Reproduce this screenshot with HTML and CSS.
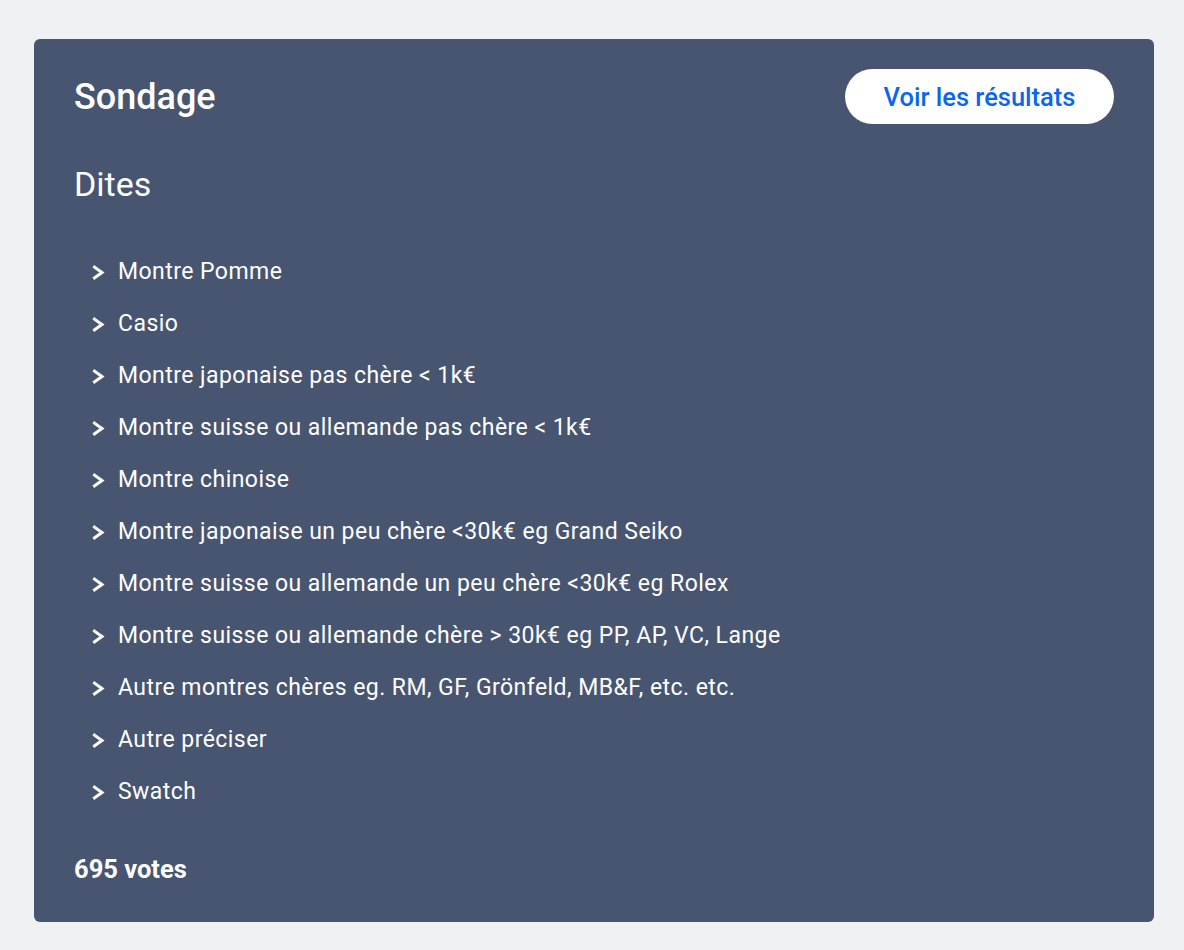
FILE: index.html
```html
<!DOCTYPE html>
<html lang="fr">
<head>
<meta charset="utf-8">
<title>Sondage</title>
<link rel="stylesheet" href="styles.css">
</head>
<body>
<section class="poll">
  <div class="poll-header">
    <h2 class="poll-title">Sondage</h2>
    <button class="results-btn">Voir les résultats</button>
  </div>
  <p class="poll-question">Dites</p>
  <ul class="options">
    <li><svg class="chev" viewBox="0 0 13 15"><polyline points="2.5,2.2 10,7.5 2.5,12.8"/></svg>Montre Pomme</li>
    <li><svg class="chev" viewBox="0 0 13 15"><polyline points="2.5,2.2 10,7.5 2.5,12.8"/></svg>Casio</li>
    <li><svg class="chev" viewBox="0 0 13 15"><polyline points="2.5,2.2 10,7.5 2.5,12.8"/></svg>Montre japonaise pas chère &lt; 1k€</li>
    <li><svg class="chev" viewBox="0 0 13 15"><polyline points="2.5,2.2 10,7.5 2.5,12.8"/></svg>Montre suisse ou allemande pas chère &lt; 1k€</li>
    <li><svg class="chev" viewBox="0 0 13 15"><polyline points="2.5,2.2 10,7.5 2.5,12.8"/></svg>Montre chinoise</li>
    <li><svg class="chev" viewBox="0 0 13 15"><polyline points="2.5,2.2 10,7.5 2.5,12.8"/></svg>Montre japonaise un peu chère &lt;30k€ eg Grand Seiko</li>
    <li><svg class="chev" viewBox="0 0 13 15"><polyline points="2.5,2.2 10,7.5 2.5,12.8"/></svg>Montre suisse ou allemande un peu chère &lt;30k€ eg Rolex</li>
    <li><svg class="chev" viewBox="0 0 13 15"><polyline points="2.5,2.2 10,7.5 2.5,12.8"/></svg>Montre suisse ou allemande chère &gt; 30k€ eg PP, AP, VC, Lange</li>
    <li><svg class="chev" viewBox="0 0 13 15"><polyline points="2.5,2.2 10,7.5 2.5,12.8"/></svg>Autre montres chères eg. RM, GF, Grönfeld, MB&amp;F, etc. etc.</li>
    <li><svg class="chev" viewBox="0 0 13 15"><polyline points="2.5,2.2 10,7.5 2.5,12.8"/></svg>Autre préciser</li>
    <li><svg class="chev" viewBox="0 0 13 15"><polyline points="2.5,2.2 10,7.5 2.5,12.8"/></svg>Swatch</li>
  </ul>
  <p class="votes">695 votes</p>
</section>
</body>
</html>
```
FILE: styles.css
```css
html, body {
  margin: 0;
  padding: 0;
}
body {
  background: #f0f1f3;
  font-family: Roboto, "Liberation Sans", sans-serif;
  padding: 39px 30px 28px 34px;
}
.poll {
  background: #475570;
  border-radius: 6px;
  color: #ffffff;
  padding: 30px 40px 38px 40px;
}
.poll-header {
  display: flex;
  justify-content: space-between;
  align-items: center;
  height: 55px;
}
.poll-title {
  margin: 0;
  font-size: 36px;
  font-weight: 500;
  line-height: 40px;
}
.results-btn {
  font-family: inherit;
  background: #ffffff;
  color: #0a66f0;
  border: none;
  border-radius: 28px;
  height: 55px;
  width: 269px;
  font-size: 25.5px;
  font-weight: 500;
  padding: 0;
}
.poll-question {
  margin: 40px 0 0 0;
  font-size: 34px;
  line-height: 40px;
}
.options {
  list-style: none;
  margin: 41px 0 0 0;
  padding: 0 0 0 18px;
}
.options li {
  display: flex;
  align-items: center;
  height: 52px;
  font-size: 23px;
  letter-spacing: 0.45px;
}
.chev {
  flex: none;
  width: 13px;
  height: 15px;
  margin: 3px 13px 0 0;
  fill: none;
  stroke: #ffffff;
  stroke-width: 3;
  stroke-linecap: square;
  stroke-linejoin: miter;
}
.votes {
  margin: 37px 0 0 0;
  font-size: 25.5px;
  font-weight: 700;
  line-height: 30px;
}
```
